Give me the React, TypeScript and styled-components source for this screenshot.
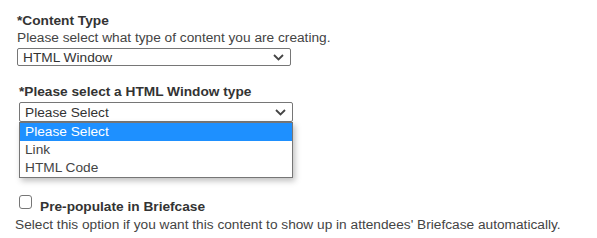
import styled, { createGlobalStyle } from "styled-components"

const GlobalStyle = createGlobalStyle`
body {
  margin: 0;
  background: #fff;
  font-family: "Liberation Sans", Arial, sans-serif;
  color: #333;
}
`

const Chevron = () => (
    <svg width="11" height="7" viewBox="0 0 11 7">
        <polyline points="1,1 5.5,5.5 10,1" fill="none" stroke="#444" strokeWidth="1.8" />
    </svg>
)

const options = ["Please Select", "Link", "HTML Code"]

const App = () => {
    return (
        <Page>
            <GlobalStyle />
            <Field indent={17}>
                <Label>*Content Type</Label>
                <Help>Please select what type of content you are creating.</Help>
                <SelectBox>
                    <span>HTML Window</span>
                    <Chevron />
                </SelectBox>
            </Field>

            <Field indent={19} spaced>
                <Label>*Please select a HTML Window type</Label>
                <SelectWrap>
                    <SelectBox tall>
                        <span>Please Select</span>
                        <Chevron />
                    </SelectBox>
                    <OptionList>
                        {options.map((o, i) => (
                            <Option key={o} active={i === 0}>{o}</Option>
                        ))}
                    </OptionList>
                </SelectWrap>
            </Field>

            <CheckSection>
                <CheckRow>
                    <Box />
                    <CheckLabel>Pre-populate in Briefcase</CheckLabel>
                </CheckRow>
                <Note>Select this option if you want this content to show up in attendees' Briefcase automatically.</Note>
            </CheckSection>
        </Page>
    )
}

const Page = styled.div`
padding-top: 12px;
`

const Field = styled.div<{ indent: number; spaced?: boolean }>`
padding-left: ${p => p.indent}px;
margin-top: ${p => (p.spaced ? "17px" : "0")};
`

const Label = styled.div`
font-size: 13.7px;
font-weight: bold;
line-height: 17px;
color: #333;
`

const Help = styled.div`
font-size: 13.7px;
line-height: 17px;
color: #444;
`

const SelectWrap = styled.div`
position: relative;
width: 274px;
margin-top: 2px;
`

const SelectBox = styled.div<{ tall?: boolean }>`
box-sizing: border-box;
display: flex;
justify-content: space-between;
align-items: center;
width: 274px;
height: ${p => (p.tall ? "20px" : "18px")};
margin-top: ${p => (p.tall ? "0" : "2px")};
padding: 0 6px 0 5px;
border: 1px solid #767676;
border-radius: 2px;
font-size: 13.7px;
color: #333;
background: #fff;
`

const OptionList = styled.div`
position: absolute;
top: 20px;
left: 0;
width: 274px;
box-sizing: border-box;
border: 1px solid #767676;
background: #fff;
box-shadow: 2px 3px 6px rgba(0, 0, 0, 0.25);
`

const Option = styled.div<{ active?: boolean }>`
height: 18px;
line-height: 18px;
padding-left: 5px;
font-size: 13.7px;
color: ${p => (p.active ? "#fff" : "#444")};
background: ${p => (p.active ? "#1e90ff" : "transparent")};
`

const CheckSection = styled.div`
padding-left: 15px;
margin-top: 73px;
`

const CheckRow = styled.div`
display: flex;
align-items: flex-start;
`

const Box = styled.span`
box-sizing: border-box;
width: 13px;
height: 14px;
margin: 0 8px 0 4px;
border: 1px solid #767676;
border-radius: 3px;
background: #fff;
`

const CheckLabel = styled.span`
padding-top: 3px;
font-size: 13.7px;
font-weight: bold;
line-height: 17px;
color: #333;
`

const Note = styled.div`
margin-top: 1px;
font-size: 13.7px;
line-height: 17px;
color: #444;
`

export default App
